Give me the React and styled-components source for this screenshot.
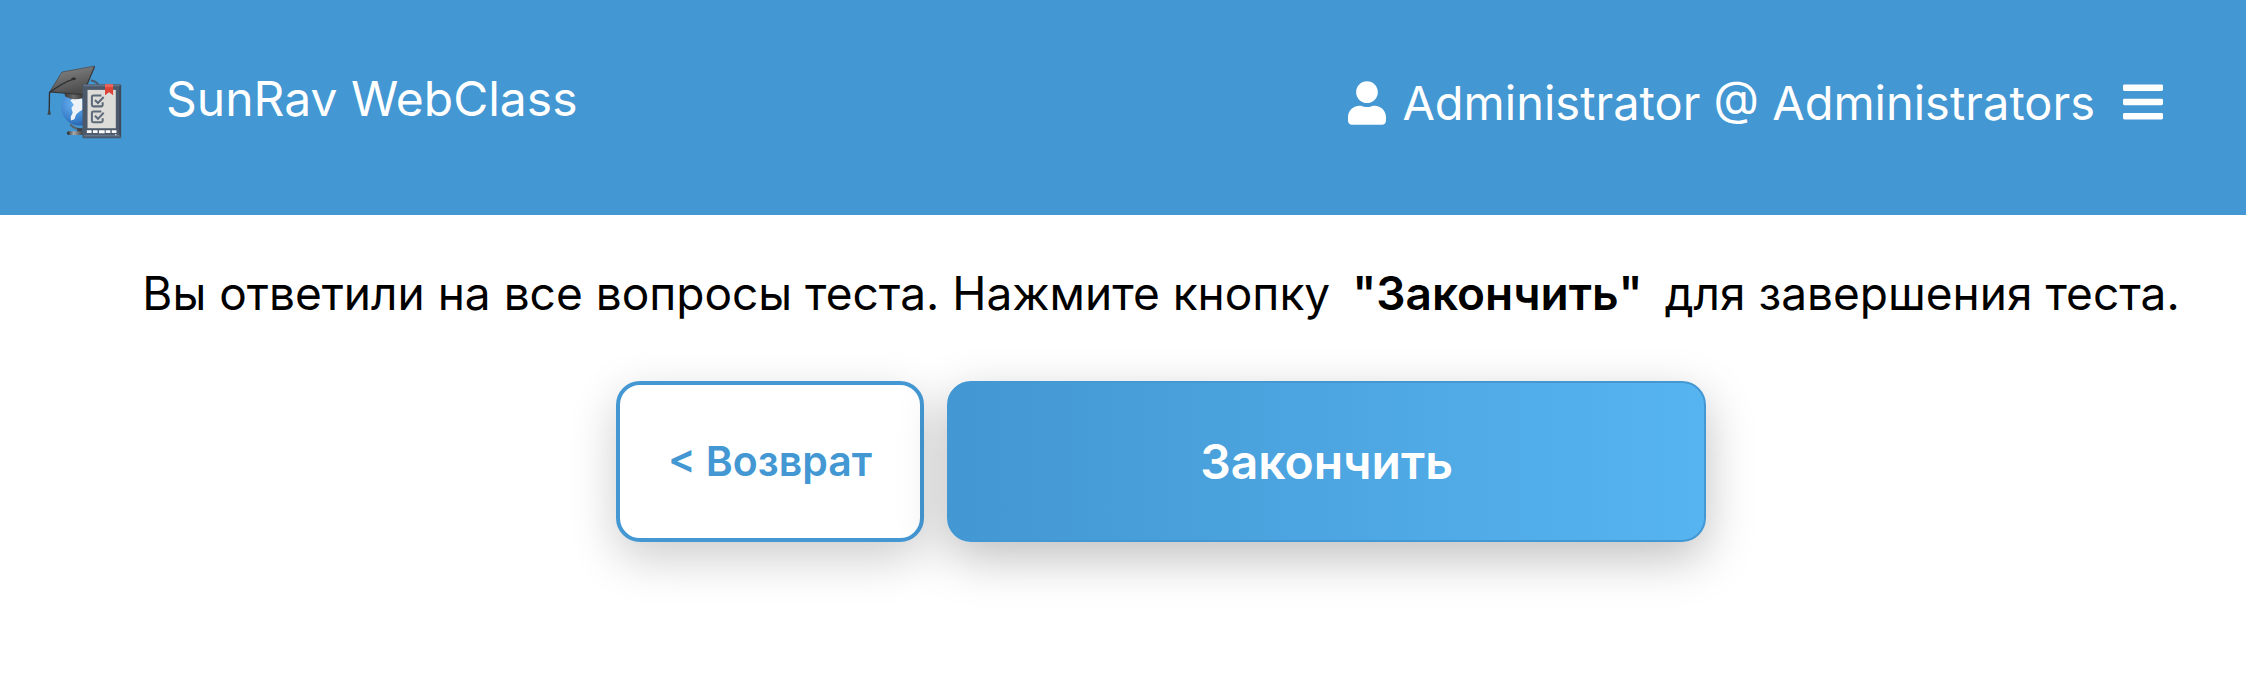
import React from "react";
import styled, { createGlobalStyle } from "styled-components";
import { FaBars, FaUser } from "react-icons/fa";

const App = () => {
    return (
        <>
        <GlobalStyle/>
        <Header>
            <Brand href="#">
                <Logo/>
                <BrandName>SunRav WebClass</BrandName>
            </Brand>
            <UserArea>
                <UserLink href="#">
                    <UserIcon/>
                    Administrator @ Administrators
                </UserLink>
                <MenuButton type="button" aria-label="Menu">
                    <FaBars/>
                </MenuButton>
            </UserArea>
        </Header>
        <Main>
            <Message>
                Вы ответили на все вопросы теста. Нажмите кнопку
                <b>"Закончить"</b>
                для завершения теста.
            </Message>
            <Buttons>
                <BackButton type="button">&lt; Возврат</BackButton>
                <FinishButton type="button">Закончить</FinishButton>
            </Buttons>
        </Main>
        </>
    )
};

const Logo = () => (
    <LogoSvg viewBox="50 45 225 220" aria-hidden="true">
        <defs>
            <radialGradient id="globe" cx="0.35" cy="0.4" r="0.75">
                <stop offset="0" stopColor="#6cb4f2"/>
                <stop offset="0.6" stopColor="#3a80cc"/>
                <stop offset="1" stopColor="#1c4d90"/>
            </radialGradient>
            <linearGradient id="cap" x1="0" y1="0" x2="0.4" y2="1">
                <stop offset="0" stopColor="#8a8a8a"/>
                <stop offset="0.5" stopColor="#6c6c6c"/>
                <stop offset="1" stopColor="#4c4c4c"/>
            </linearGradient>
            <linearGradient id="band" x1="0" y1="0" x2="1" y2="0">
                <stop offset="0" stopColor="#333"/>
                <stop offset="0.5" stopColor="#6a6a6a"/>
                <stop offset="1" stopColor="#333"/>
            </linearGradient>
            <linearGradient id="foot" x1="0" y1="0" x2="1" y2="0">
                <stop offset="0" stopColor="#222"/>
                <stop offset="0.4" stopColor="#aaa"/>
                <stop offset="1" stopColor="#333"/>
            </linearGradient>
        </defs>
        {/* globe on its stand */}
        <path d="M183 91 Q198 92 207 106" fill="none" stroke="#4b5a6c" strokeWidth="6"/>
        <path d="M121 222 Q138 238 162 237" fill="none" stroke="#59636e" strokeWidth="6"/>
        <path d="M142 233 h16 v12 h-16z" fill="#3c4248"/>
        <rect x="112" y="242" width="50" height="11" rx="5" fill="url(#foot)"/>
        <circle cx="150" cy="170" r="55" fill="url(#globe)"/>
        <path d="M122 150 L132 144 L153 140 L158 150 L158 178 L148 184 L139 192 L134 206 L124 210 L123 199 L129 187 L125 173 L132 163 Z" fill="#edf3f7"/>
        {/* graduation cap */}
        <path d="M102 122 L162 129 L160 143 Q130 153 107 139 Z" fill="url(#band)"/>
        <path d="M97 66 L194 48 L170 110 L158 132 L61 124 Z" fill="url(#cap)" stroke="#444" strokeWidth="2"/>
        <path d="M61 125 L158 133 L194 50" fill="none" stroke="#383838" strokeWidth="3"/>
        <path d="M133 86 Q97 98 60 127 L59 185" fill="none" stroke="#2e3032" strokeWidth="4"/>
        <ellipse cx="132" cy="86" rx="7" ry="4" fill="#303030"/>
        <path d="M56 181 h6 l2 12 h-10z" fill="#3f464d"/>
        {/* e-reader with the check list */}
        <rect x="158" y="102" width="115" height="161" rx="3" fill="#4b596b"/>
        <path d="M161 106 H271" stroke="#66758a" strokeWidth="5"/>
        <path d="M270 106 V256" stroke="#3d4959" strokeWidth="5"/>
        <path d="M163 255 H268" stroke="#66758a" strokeWidth="5"/>
        <rect x="173" y="119" width="84" height="114" fill="#dddcd9"/>
        <path d="M225 102 h24 v33 l-12 -9 l-12 9z" fill="#dd4337"/>
        <path d="M225 102 h24 v9 h-24z" fill="#e8655a"/>
        <g fill="none" stroke="#5d6a79" strokeWidth="6">
            <path d="M214 136 H190 Q186 136 186 140 V164 Q186 168 190 168 H214 Q218 168 218 164 V156"/>
            <path d="M195 149 L204 158 L221 140"/>
            <path d="M214 183 H190 Q186 183 186 187 V211 Q186 215 190 215 H214 Q218 215 218 211 V203"/>
            <path d="M195 196 L204 205 L221 187"/>
        </g>
        <g fill="#fff">
            <rect x="171" y="239" width="14" height="8"/>
            <rect x="189" y="239" width="14" height="8"/>
            <rect x="207" y="239" width="17" height="9"/>
            <rect x="227" y="239" width="14" height="8"/>
            <rect x="245" y="239" width="14" height="8"/>
            <circle cx="257" cy="252" r="2"/>
        </g>
    </LogoSvg>
);

export default App;



const GlobalStyle = createGlobalStyle`
    :root {
        --color-blue: #4397d2;
        --color-light-blue: #56b4f0;
    }
    * {
        box-sizing: border-box;
    }
    body {
        margin: 0;
        background-color: #fff;
        color: #000;
        font-family: Inter, "Noto Sans", sans-serif;
        font-size: 46px;
        line-height: 56px;
    }
`
const Header = styled.header`
    display: flex;
    justify-content: space-between;
    align-items: center;
    padding: 65px 83px 76px 46px;
    background-color: var(--color-blue);
    color: #fff;
`
const Brand = styled.a`
    display: flex;
    align-items: center;
    gap: 44px;
    color: inherit;
    text-decoration: none;
`
const LogoSvg = styled.svg`
    width: 76px;
    height: 74px;
`
const BrandName = styled.span`
    padding-bottom: 6px;
    font-size: 48px;
`
const UserArea = styled.div`
    display: flex;
    align-items: center;
    gap: 28px;
`
const UserLink = styled.a`
    display: flex;
    align-items: center;
    gap: 16px;
    padding-top: 2px;
    color: inherit;
    font-size: 47px;
    text-decoration: none;
`
const UserIcon = styled(FaUser)`
    width: 38px;
    height: 44px;
`
const MenuButton = styled.button`
    display: flex;
    padding: 0;
    border: none;
    background: none;
    color: inherit;
    font-size: 46px;
    cursor: pointer;

    svg {
        width: 40px;
    }
`
const Main = styled.main`
    display: flex;
    flex-direction: column;
    align-items: center;
    gap: 60px;
    padding: 50px 36px 96px 112px;
`
const Message = styled.p`
    margin: 0;
    text-align: center;

    b {
        margin: 0 22px;
        font-weight: 600;
    }
`
const Buttons = styled.div`
    display: flex;
    justify-content: center;
    gap: 23px;
`
const Button = styled.button`
    padding: 48px;
    border: 2px solid var(--color-blue);
    border-radius: 24px;
    font-family: inherit;
    font-weight: 600;
    line-height: 57px;
    box-shadow: 0 16px 48px rgba(0, 0, 0, 0.2);
    cursor: pointer;
`
const BackButton = styled(Button)`
    min-width: 306px;
    border-width: 4px;
    background-color: #fff;
    color: var(--color-blue);
    font-size: 41px;
`
const FinishButton = styled(Button)`
    min-width: 759px;
    background: linear-gradient(to right, var(--color-blue), var(--color-light-blue));
    color: #fff;
    font-size: 48px;
    box-shadow: 0 16px 48px rgba(0, 0, 0, 0.25);
`
